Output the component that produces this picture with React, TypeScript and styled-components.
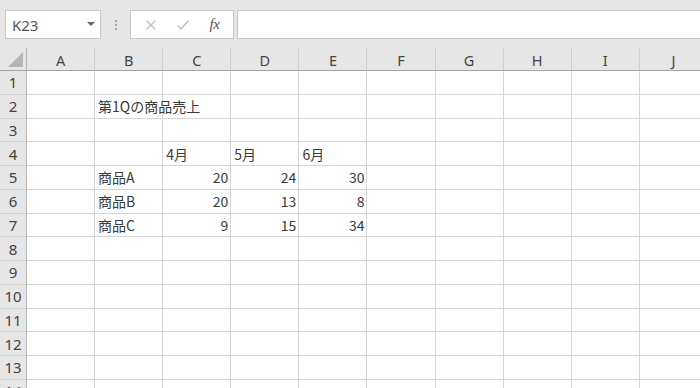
import React from "react";
import styled, { createGlobalStyle } from "styled-components";

const GlobalStyle = createGlobalStyle`
  html, body {
    margin: 0;
    padding: 0;
    background: #ffffff;
    overflow: hidden;
  }
  * {
    box-sizing: border-box;
  }
`;

const COLS = ["A", "B", "C", "D", "E", "F", "G", "H", "I", "J"];
const ROW_COUNT = 14;

type CellValue = { text: string; align?: "left" | "right" };

const data: Record<string, CellValue> = {
  B2: { text: "第1Qの商品売上" },
  C4: { text: "4月" },
  D4: { text: "5月" },
  E4: { text: "6月" },
  B5: { text: "商品A" },
  C5: { text: "20", align: "right" },
  D5: { text: "24", align: "right" },
  E5: { text: "30", align: "right" },
  B6: { text: "商品B" },
  C6: { text: "20", align: "right" },
  D6: { text: "13", align: "right" },
  E6: { text: "8", align: "right" },
  B7: { text: "商品C" },
  C7: { text: "9", align: "right" },
  D7: { text: "15", align: "right" },
  E7: { text: "34", align: "right" },
};

const Page = styled.div`
  width: 700px;
  height: 388px;
  overflow: hidden;
  font-family: "Noto Sans CJK JP", "Noto Sans", sans-serif;
  background: #ffffff;
`;

const Toolbar = styled.div`
  height: 48px;
  background: #e6e6e6;
  display: flex;
  align-items: flex-start;
  padding: 10px 0 0 5px;
`;

const NameBox = styled.div`
  width: 96px;
  height: 29px;
  background: #ffffff;
  border: 1px solid #c8c8c8;
  display: flex;
  align-items: center;
  justify-content: space-between;
  padding: 0 5px 0 6px;
  font-family: "Noto Sans", "Liberation Sans", sans-serif;
  font-size: 15px;
  color: #555555;
`;

const Caret = styled.span`
  width: 0;
  height: 0;
  border-left: 4px solid transparent;
  border-right: 4px solid transparent;
  border-top: 4px solid #666666;
  margin-top: -2px;
`;

const Dots = styled.div`
  width: 29px;
  height: 29px;
  display: flex;
  flex-direction: column;
  align-items: center;
  justify-content: center;
  gap: 2px;
  span {
    width: 2px;
    height: 2px;
    background: #a8a8a8;
  }
`;

const ActionBox = styled.div`
  width: 104px;
  height: 29px;
  background: #ffffff;
  border: 1px solid #c8c8c8;
  display: flex;
  align-items: center;
  justify-content: space-around;
  padding: 0 4px;
`;

const Fx = styled.span`
  font-family: "Liberation Serif", "DejaVu Serif", serif;
  font-style: italic;
  font-size: 15px;
  color: #555555;
  letter-spacing: -0.5px;
`;

const FormulaInput = styled.div`
  flex: 1;
  height: 29px;
  margin-left: 3px;
  background: #ffffff;
  border: 1px solid #c8c8c8;
  border-right: none;
`;

const Sheet = styled.div`
  display: grid;
  grid-template-columns: 27px repeat(${COLS.length}, 68.1px);
  grid-template-rows: 23px repeat(${ROW_COUNT}, 23.75px);
  background: #ffffff;
`;

const Corner = styled.div`
  position: relative;
  background: #e6e6e6;
  border-right: 1px solid #b4b4b4;
  border-bottom: 1px solid #a6a6a6;
  &::after {
    content: "";
    position: absolute;
    right: 3px;
    bottom: 3px;
    width: 0;
    height: 0;
    border-left: 15px solid transparent;
    border-bottom: 15px solid #b6b6b6;
  }
`;

const ColHeader = styled.div`
  background: #e6e6e6;
  border-right: 1px solid #cfcfcf;
  border-bottom: 1px solid #a6a6a6;
  display: flex;
  align-items: center;
  justify-content: center;
  font-family: "Noto Sans", "Liberation Sans", sans-serif;
  font-size: 14.5px;
  color: #444444;
  padding-top: 1px;
`;

const RowHeader = styled.div`
  background: #e6e6e6;
  border-right: 1px solid #b4b4b4;
  border-bottom: 1px solid #cfcfcf;
  display: flex;
  align-items: center;
  justify-content: center;
  font-family: "Noto Sans", "Liberation Sans", sans-serif;
  font-size: 15px;
  color: #444444;
`;

const Cell = styled.div<{ $align?: "left" | "right" }>`
  border-right: 1px solid #d6d6d6;
  border-bottom: 1px solid #d6d6d6;
  display: flex;
  align-items: center;
  justify-content: ${(p) => (p.$align === "right" ? "flex-end" : "flex-start")};
  padding: 0 2px 0 3px;
  font-size: 14px;
  color: #3a3a3a;
  white-space: nowrap;
  overflow: visible;
  position: relative;
  z-index: 1;
`;

const XIcon = () => (
  <svg width="12" height="12" viewBox="0 0 12 12">
    <path d="M1.5 1.5 L10.5 10.5 M10.5 1.5 L1.5 10.5" stroke="#bdbdbd" strokeWidth="1.3" fill="none" />
  </svg>
);

const CheckIcon = () => (
  <svg width="14" height="12" viewBox="0 0 14 12">
    <path d="M1.5 6.5 L5 10 L12.5 1.5" stroke="#bdbdbd" strokeWidth="1.4" fill="none" />
  </svg>
);

export default function App() {
  const rows = Array.from({ length: ROW_COUNT }, (_, i) => i + 1);
  return (
    <Page>
      <GlobalStyle />
      <Toolbar>
        <NameBox>
          K23
          <Caret />
        </NameBox>
        <Dots>
          <span />
          <span />
          <span />
        </Dots>
        <ActionBox>
          <XIcon />
          <CheckIcon />
          <Fx>fx</Fx>
        </ActionBox>
        <FormulaInput />
      </Toolbar>
      <Sheet>
        <Corner />
        {COLS.map((c) => (
          <ColHeader key={c}>{c}</ColHeader>
        ))}
        {rows.map((r) => (
          <React.Fragment key={r}>
            <RowHeader>{r}</RowHeader>
            {COLS.map((c) => {
              const v = data[`${c}${r}`];
              return (
                <Cell key={c} $align={v?.align}>
                  {v?.text}
                </Cell>
              );
            })}
          </React.Fragment>
        ))}
      </Sheet>
    </Page>
  );
}
